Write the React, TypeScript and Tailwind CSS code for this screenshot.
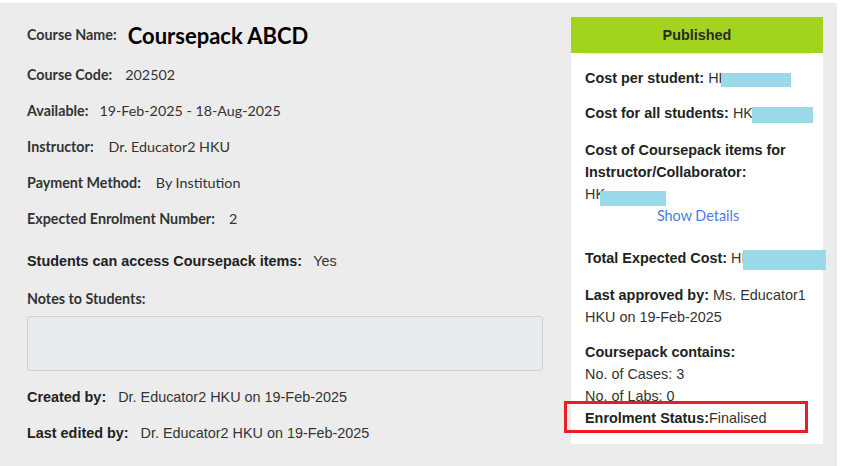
import React from 'react'

const lato = "font-['Lato','Noto_Sans',sans-serif]"
const arial = "font-['Liberation_Sans','Arial',sans-serif]"

interface Row {
  label: string;
  value: string;
  gap: string;
}

const rows: Row[] = [
  { label: 'Course Code:', value: '202502', gap: 'ml-[13px]' },
  { label: 'Available:', value: '19-Feb-2025 - 18-Aug-2025', gap: 'ml-[11px]' },
  { label: 'Instructor:', value: 'Dr. Educator2 HKU', gap: 'ml-[15px]' },
  { label: 'Payment Method:', value: 'By Institution', gap: 'ml-[15px]' },
  { label: 'Expected Enrolment Number:', value: '2', gap: 'ml-[14px]' },
]

function Masked({ prefix, className }: { prefix: string; className: string }) {
  return (
    <span className="relative">
      {prefix}
      <span className={`absolute bg-[#9bd8ea] ${className}`} />
    </span>
  )
}

export default function App() {
  return (
    <div className="h-[466px] w-[845px] bg-white pt-[3px] pr-[8px]">
      <div className="flex h-full bg-[#ececec] text-[#333]">
        {/* left column */}
        <div className={`w-[544px] shrink-0 pl-[27px] pt-[14px] ${lato}`}>
          <div className="flex h-9 items-center">
            <span className="text-[14.3px] font-bold">Course Name:</span>
            <span className="ml-[11px] text-[22px] font-bold text-black">Coursepack ABCD</span>
          </div>
          {rows.map((r, i) => (
            <div key={r.label} className={`flex h-9 items-center text-[14.3px] ${i === 0 ? 'mt-[4px]' : ''}`}>
              <span className="font-bold">{r.label}</span>
              <span className={r.gap}>{r.value}</span>
            </div>
          ))}
          <div className={`mt-[7px] flex h-9 items-center text-[14.4px] ${arial}`}>
            <span className="font-bold text-[#222]">Students can access Coursepack items:</span>
            <span className="ml-[11px]">Yes</span>
          </div>
          <div className="mt-[1px] flex h-9 items-center text-[14.3px] font-bold">Notes to Students:</div>
          <div className="-mt-px h-[55px] w-[516px] rounded-[3px] border border-[#cdd1d7] bg-[#e8ebee]" />
          <div className={`mt-[9px] flex h-9 items-center text-[14.4px] ${arial}`}>
            <span className="font-bold text-[#222]">Created by:</span>
            <span className="ml-[12px]">Dr. Educator2 HKU on 19-Feb-2025</span>
          </div>
          <div className={`flex h-9 items-center text-[14.4px] ${arial}`}>
            <span className="font-bold text-[#222]">Last edited by:</span>
            <span className="ml-[12px]">Dr. Educator2 HKU on 19-Feb-2025</span>
          </div>
        </div>

        {/* right card */}
        <div className="ml-[27px] mt-[14px] self-start w-[252px] shrink-0">
          <div className={`bg-white pb-[15px] text-[14.4px] leading-[22px] ${arial}`}>
            <div className="flex h-9 items-center justify-center bg-[#a3d41d] font-bold text-[#2a2a2a]">
              Published
            </div>
            <div className="ml-[14px] mr-[13px] h-px bg-[#e6e6e6]" />
            <div className="pl-[14px] pr-[12px] pt-[13px]">
              <p>
                <b className="text-[#222]">Cost per student:</b>{' '}
                <Masked prefix="HK" className="left-[13px] top-[3px] h-[14px] w-[70px]" />
              </p>
              <p className="mt-[13px]">
                <b className="text-[#222]">Cost for all students:</b>{' '}
                <Masked prefix="HK" className="left-[19px] top-[2px] h-[16px] w-[61px]" />
              </p>
              <p className="mt-[15px] font-bold text-[#222]">
                Cost of Coursepack items for
                <br />
                Instructor/Collaborator:
              </p>
              <p>
                <Masked prefix="HK" className="left-[15px] top-[5px] h-[15px] w-[66px]" />
              </p>
              <p className={`text-center text-[#4a7ee0] ${lato}`}>Show Details</p>
              <p className="mt-[20px] whitespace-nowrap">
                <b className="text-[#222]">Total Expected Cost:</b>{' '}
                <Masked prefix="HK" className="left-[12px] top-0 h-[20px] w-[83px]" />
              </p>
              <p className="mt-[15px]">
                <b className="text-[#222]">Last approved by:</b> Ms. Educator1
                <br />
                HKU on 19-Feb-2025
              </p>
              <p className="mt-[13px] font-bold text-[#222]">Coursepack contains:</p>
              <p>No. of Cases: 3</p>
              <p>No. of Labs: 0</p>
              <div className="relative">
                <b className="text-[#222]">Enrolment Status:</b>Finalised
                <span className="pointer-events-none absolute left-[-21px] top-[-6px] h-[32px] w-[244px] border-[3px] border-[#ec1c24]" />
              </div>
            </div>
          </div>
        </div>
      </div>
    </div>
  )
}
